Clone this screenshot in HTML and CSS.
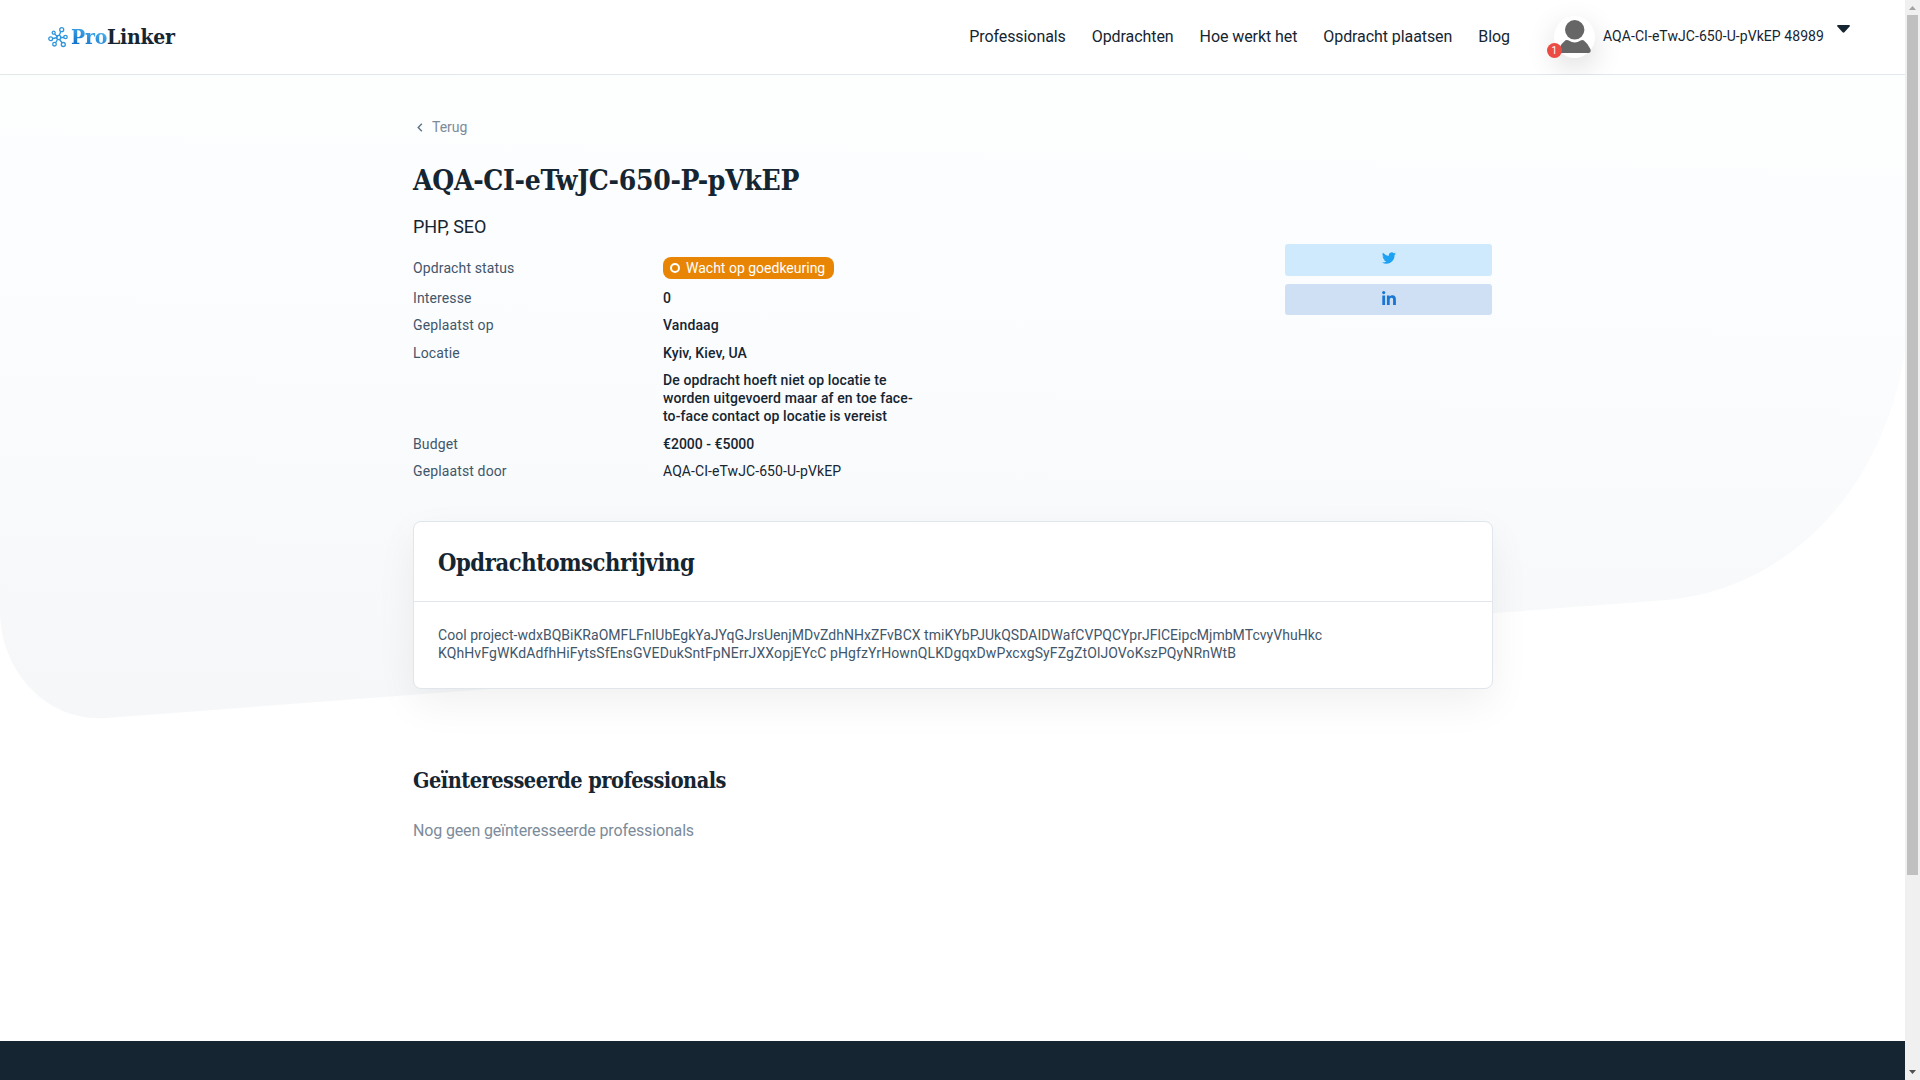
FILE: index.html
```html
<!DOCTYPE html>
<html lang="nl">
<head>
<meta charset="utf-8">
<title>ProLinker</title>
<link rel="stylesheet" href="styles.css">
</head>
<body>
<div class="page">
  <header class="header">
    <a class="logo">
      <svg class="logo-mark" width="20" height="21" viewBox="0 0 20 21" fill="none" stroke="#3195dc" stroke-width="1.3">
        <path d="M9.500 10.500 5 11.500M10 10 6.500 7M11 9l2-5M12.500 10.500h3.500M11.500 12.500l2.800 3.500M9.500 12.500 7.500 16"/>
        <circle cx="10.700" cy="10.500" r="2.100"/><circle cx="2.700" cy="11.700" r="1.900"/><circle cx="5.700" cy="5.700" r="1.500"/><circle cx="13.700" cy="2.700" r="2"/><circle cx="17.500" cy="10" r="1.700"/><circle cx="15.300" cy="17.500" r="2"/><circle cx="6.500" cy="17.200" r="1.800"/>
      </svg>
      <span class="logo-text"><span class="logo-pro">Pro</span>Linker</span>
    </a>
    <nav class="nav">
      <a>Professionals</a><a>Opdrachten</a><a>Hoe werkt het</a><a>Opdracht plaatsen</a><a>Blog</a>
    </nav>
    <div class="user">
      <div class="avatar">
        <svg width="41" height="42" viewBox="0 0 41 42"><circle cx="20.700" cy="13.800" r="9.700" fill="#666"/><path d="M11.500 24.300q2-.8 3.300.3 5.900 3.700 11.800 0 1.500-1.100 3.300-.2 4 3 6.600 8.800.9 3.800-2.200 3.800H7q-3-.3-2.200-3.800 2.300-5.700 6.700-8.900z" fill="#666"/></svg>
        <span class="badge">1</span>
      </div>
      <span class="user-name">AQA-CI-eTwJC-650-U-pVkEP 48989</span>
      <svg class="caret" width="13" height="8" viewBox="0 0 13 8"><path d="M1 0h11q1.500.4.6 1.500L7.400 7.200q-.9.900-1.800 0L.4 1.500Q-.4.400 1 0z" fill="#152531"/></svg>
    </div>
  </header>
  <main class="main">
    <svg class="backdrop" width="1905" height="650" viewBox="0 75 1905 650">
      <defs><linearGradient id="fade" x1=".53" y1="0" x2=".47" y2="1"><stop offset="0" stop-color="#fdfefe"/><stop offset=".45" stop-color="#fbfcfe"/><stop offset="1" stop-color="#f5f7f9"/></linearGradient></defs>
      <path d="M0 75H1905V350C1888 472 1802 590 1660 600.500L106 718C47 722 0 672 0 610Z" fill="url(#fade)"/>
    </svg>
    <div class="content">
      <a class="back"><svg width="6" height="9" viewBox="0 0 6 9"><path d="M4.800.8 1.200 4.500l3.600 3.700" fill="none" stroke="#5f7386" stroke-width="1.400"/></svg>Terug</a>
      <h1>AQA-CI-eTwJC-650-P-pVkEP</h1>
      <div class="overview">
        <div class="details">
          <p class="skills">PHP, SEO</p>
          <dl class="facts">
            <dt class="status-row">Opdracht status</dt><dd class="status-row"><span class="status"><i class="ring"></i>Wacht op goedkeuring</span></dd>
            <dt>Interesse</dt><dd>0</dd>
            <dt>Geplaatst op</dt><dd>Vandaag</dd>
            <dt>Locatie</dt><dd>Kyiv, Kiev, UA</dd>
            <dt></dt><dd>De opdracht hoeft niet op locatie te<br>worden uitgevoerd maar af en toe face-<br>to-face contact op locatie is vereist</dd>
            <dt>Budget</dt><dd class="budget">€2000 - €5000</dd>
            <dt>Geplaatst door</dt><dd class="plain">AQA-CI-eTwJC-650-U-pVkEP</dd>
          </dl>
        </div>
        <div class="share">
          <a class="twitter"><svg width="14" height="12" viewBox="0 0 24 20"><path d="M23.950 2.600a10 10 0 0 1-2.800.8A5 5 0 0 0 23.300.7a10 10 0 0 1-3.100 1.200 4.900 4.900 0 0 0-8.400 4.500A14 14 0 0 1 1.700 1.200a4.900 4.900 0 0 0 1.500 6.600 5 5 0 0 1-2.200-.6v.1a4.900 4.900 0 0 0 4 4.800 5 5 0 0 1-2.200.1 4.900 4.900 0 0 0 4.600 3.400A10 10 0 0 1 0 17.500a14 14 0 0 0 7.500 2.200c9.100 0 14-7.500 14-14V5a10 10 0 0 0 2.450-2.400z" fill="#1da1f2"/></svg></a>
          <a class="linkedin"><svg width="14" height="14" viewBox="0 0 14 14" fill="#1976d2"><circle cx="1.700" cy="1.600" r="1.600"/><path d="M.3 4.500h2.800V14H.3zM4.900 4.500h2.700v1.300C8.200 4.800 9.200 4.300 10.300 4.300c2.800 0 3.600 1.800 3.600 4.400V14h-2.800V9.200c0-1.200-.1-2.500-1.600-2.500S7.700 7.900 7.700 9.100V14H4.900z"/></svg></a>
        </div>
      </div>
      <section class="card">
        <h2>Opdrachtomschrijving</h2>
        <p>Cool project-wdxBQBiKRaOMFLFnIUbEgkYaJYqGJrsUenjMDvZdhNHxZFvBCX tmiKYbPJUkQSDAIDWafCVPQCYprJFlCEipcMjmbMTcvyVhuHkc<br><span class="loose">KQhHvFgWKdAdfhHiFytsSfEnsGVEDukSntFpNErrJXXopjEYcC pHgfzYrHownQLKDgqxDwPxcxgSyFZgZtOlJOVoKszPQyNRnWtB</span></p>
      </section>
      <section class="interested">
        <h3>Geïnteresseerde professionals</h3>
        <p>Nog geen geïnteresseerde professionals</p>
      </section>
    </div>
  </main>
  <footer class="footer"></footer>
</div>
<aside class="scrollbar">
  <svg width="7" height="4" viewBox="0 0 7 4"><path d="M0 4 3.500 0 7 4z" fill="#a3a3a3"/></svg>
  <span class="thumb"></span>
  <svg class="down" width="7" height="4" viewBox="0 0 7 4"><path d="M0 0h7L3.500 4z" fill="#505050"/></svg>
</aside>
</body>
</html>
```
FILE: styles.css
```css
* { box-sizing: border-box; margin: 0; padding: 0; }
body { display: flex; width: 1920px; height: 1080px; overflow: hidden; font-family: Roboto, sans-serif; font-size: 14px; line-height: 18px; color: #152531; background: #fff; }
svg { display: block; flex: none; }
.page { display: flex; flex-direction: column; width: 1905px; height: 1080px; overflow: hidden; }
.header { display: flex; align-items: center; height: 75px; flex: none; padding: 0 55px 0 48px; border-bottom: 1px solid #e2e7eb; }
.logo { display: flex; align-items: center; gap: 3px; }
.logo-text, h1, h2, h3 { font-family: "Roboto Slab", "DejaVu Serif Condensed", "DejaVu Serif", serif; font-weight: 700; white-space: nowrap; }
.logo-text { font-size: 21px; line-height: 28px; letter-spacing: -.25px; }
.logo-pro { color: transparent; background: linear-gradient(20deg, #1474cc 20%, #53b9f4 85%); background-clip: text; -webkit-background-clip: text; }
.nav { display: flex; gap: 26px; margin-left: auto; font-size: 16px; letter-spacing: -.08px; }
.user { display: flex; align-items: center; margin-left: 44px; }
.avatar { position: relative; width: 41px; height: 42px; border-radius: 50%; background: #fff; box-shadow: 0 10px 30px rgba(0,0,0,.14); }
.badge { position: absolute; left: -7px; bottom: 0; width: 15px; height: 15px; border-radius: 50%; background: #eb4b42; color: #fff; font-size: 10px; line-height: 15px; text-align: center; }
.user-name { margin: -2px 0 0 8px; white-space: nowrap; letter-spacing: .07px; }
.caret { margin: -17px 0 0 13px; }
.main { position: relative; flex: none; height: 966px; }
.backdrop { position: absolute; left: 0; top: 0; }
.content { position: relative; width: 1080px; margin-left: 413px; padding-top: 43px; }
.back { display: flex; align-items: center; gap: 9px; padding-left: 4px; color: #7c8b9a; }
h1 { margin-top: 27px; font-size: 28px; line-height: 36px; letter-spacing: -.3px; }
.overview { display: flex; justify-content: space-between; margin-top: 16px; }
.skills { font-size: 18px; line-height: 24px; letter-spacing: -.1px; }
.facts { display: grid; grid-template-columns: 250px 260px; row-gap: 9.500px; margin-top: 18px; letter-spacing: .13px; }
.facts dt { color: #42566a; }
.facts dd { font-weight: 500; white-space: nowrap; letter-spacing: .11px; }
.facts .budget { letter-spacing: 0; }
.facts .plain { font-weight: 400; letter-spacing: .08px; }
.facts .status-row { height: 22px; padding-top: 2px; }
.facts dd.status-row { padding-top: 0; letter-spacing: 0; }
.status { display: inline-flex; align-items: center; height: 22px; padding: 0 9px 1px 7px; border-radius: 8px; background: #e88504; color: #fff; font-weight: 400; }
.ring { width: 10px; height: 10px; margin: 1px 6px 0 0; border: 2px solid #fff; border-radius: 50%; }
.share { display: flex; flex-direction: column; gap: 8px; width: 207px; margin-right: 1px; padding-top: 29px; }
.share a { display: flex; justify-content: center; height: 32px; border-radius: 3px; }
.twitter { padding-top: 8px; background: #cfeafd; }
.share .linkedin { height: 31px; padding-top: 7px; background: #cfe0f5; }
.card { height: 168px; margin-top: 41px; border: 1px solid #e0e6eb; border-radius: 8px; background: #fff; box-shadow: 0 15px 40px rgba(0,0,0,.06); }
.card h2 { height: 80px; padding: 25px 24px 0; border-bottom: 1px solid #e0e6eb; font-size: 23.500px; line-height: 32px; letter-spacing: -.42px; }
.card p { padding: 24px 24px 0; color: #42566a; white-space: nowrap; letter-spacing: .037px; }
.card .loose { letter-spacing: .11px; }
.interested { margin-top: 76px; }
.interested h3 { font-size: 21.500px; line-height: 32px; letter-spacing: -.49px; }
.interested p { margin-top: 23px; font-size: 16px; line-height: 22px; color: #7c8b9a; letter-spacing: -.15px; }
.footer { flex: 1; background: #152531; }
.scrollbar { display: flex; flex-direction: column; align-items: center; width: 15px; height: 1080px; padding: 6px 0 6px; background: #f0f0f0; }
.thumb { width: 11px; height: 860px; margin-top: 5px; background: #c0c0c0; }
.down { margin-top: auto; }
```
